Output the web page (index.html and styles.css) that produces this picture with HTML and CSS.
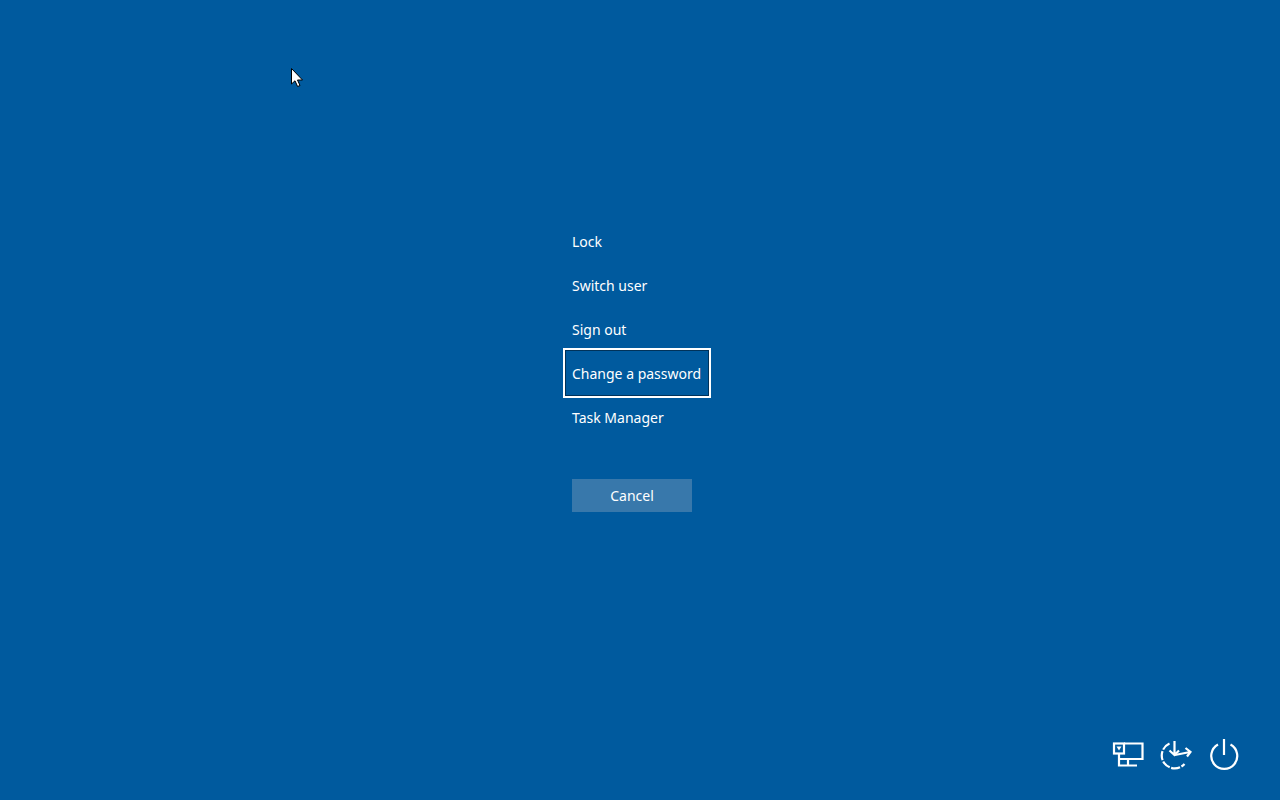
FILE: index.html
```html
<!DOCTYPE html>
<html lang="en">
<head>
  <meta charset="UTF-8" />
  <title>Security options</title>
  <link rel="stylesheet" href="styles.css">
</head>
<body>

  <!-- Mouse pointer -->
  <svg class="pointer" width="12" height="20" viewBox="0 0 12 20">
    <path d="M0.500 0.500V16L4 12.800L6.600 18.500L9 17.500L6.500 12H11.500Z" fill="#fff" stroke="#000" stroke-width="1"/>
  </svg>

  <!-- Main menu -->
  <div class="options">
    <a href="#" class="option">Lock</a>
    <a href="#" class="option">Switch user</a>
    <a href="#" class="option">Sign out</a>
    <a href="#" class="option focused">Change a password</a>
    <a href="#" class="option">Task Manager</a>
    <button class="cancel-btn">Cancel</button>
  </div>

  <!-- Bottom right icons -->
  <div class="tray">
    <svg class="tray-icon" width="32" height="32" viewBox="0 0 32 32" fill="none" stroke="#fff" stroke-width="2.200">
      <path d="M12 4.500H30.500V20H7"/>
      <rect x="2" y="4.500" width="10" height="10"/>
      <path d="M4.500 7.500H9.500L7 11.500Z" fill="#fff" stroke="none"/>
      <path d="M7 14V26.500H25M16 20V26"/>
    </svg>
    <svg class="tray-icon" width="32" height="32" viewBox="0 0 32 32" fill="none" stroke="#fff" stroke-width="2.200">
      <path d="M9.500 4.500A13 13 0 1 0 24.500 25" stroke-dasharray="9 1.500"/>
      <path d="M14.500 2V15.500M9.500 11.500L14.500 16L19 11.500"/>
      <path d="M15 16L30 13M25.500 9L30.500 13L27 17.500"/>
    </svg>
    <svg class="tray-icon" width="32" height="32" viewBox="0 0 32 32" fill="none" stroke="#fff" stroke-width="2.200">
      <path d="M10 5.500A13 13 0 1 0 22.500 5.500"/>
      <path d="M16 0V16"/>
    </svg>
  </div>

</body>
</html>
```

FILE: styles.css
```css
* {
  margin: 0;
  padding: 0;
  box-sizing: border-box;
}

body {
  font-family: 'Noto Sans', sans-serif;
  background-color: #005a9e;
  color: #ffffff;
  height: 800px;
  display: flex;
  flex-direction: column;
  overflow: hidden;
}

/* Pointer floats over the desktop */
.pointer {
  position: absolute;
  top: 68px;
  left: 291px;
}

/* Menu */
.options {
  display: flex;
  flex-direction: column;
  align-items: flex-start;
  padding: 219px 0 0 566px;
}

.option {
  height: 44px;
  padding: 0 7px 0 6px;
  display: flex;
  align-items: center;
  font-size: 14px;
  color: #ffffff;
  text-decoration: none;
  white-space: nowrap;
}

.option.focused {
  outline: 2px solid #ffffff;
  outline-offset: 1px;
  box-shadow: 0 0 0 1px #00325a;
}

.cancel-btn {
  margin: 40px 0 0 6px;
  width: 120px;
  height: 33px;
  padding-bottom: 1px;
  background-color: #3878ab;
  color: #ffffff;
  border: none;
  font-family: inherit;
  font-size: 14px;
}

/* Tray */
.tray {
  margin-top: auto;
  padding: 0 40px 29px 0;
  display: flex;
  justify-content: flex-end;
  gap: 16px;
}
```
